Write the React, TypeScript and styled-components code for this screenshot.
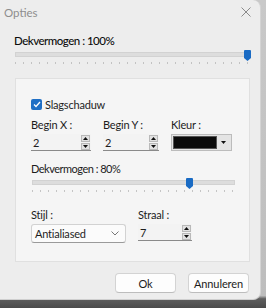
import React from "react";
import styled, { createGlobalStyle } from "styled-components";

const Global = createGlobalStyle`
  html, body { margin: 0; padding: 0; }
  body {
    width: 266px; height: 308px; overflow: hidden;
    background: linear-gradient(180deg, #c9c9c9 0%, #bdbdbd 96%, #5e5e5e 97%, #4a4a4a 100%);
    font-family: "Lato", "Noto Sans", sans-serif;
    font-size: 11px;
    letter-spacing: -0.2px;
    color: #1e1e1e;
  }
`;

const Window = styled.div`
  width: 261px;
  height: 300px;
  box-sizing: border-box;
  background: #ededed;
  border-right: 1px solid #d4d4d4;
  border-bottom: 1px solid #cfcfcf;
  border-radius: 0 8px 8px 0;
  display: flex;
  flex-direction: column;
`;

const TitleBar = styled.div`
  height: 24px;
  display: flex;
  align-items: center;
  justify-content: space-between;
  padding: 0 6px 0 4px;
  color: #8d8d8d;
  font-size: 11.5px;
  letter-spacing: 0;
`;

const Close = styled.span`
  width: 16px;
  display: flex;
  justify-content: center;
`;

const Body = styled.div`
  padding: 10px 11px 0 14px;
  display: flex;
  flex-direction: column;
`;

const Label = styled.div<{ $strong?: boolean; $tight?: boolean }>`
  height: 13px;
  line-height: 13px;
  font-size: ${p => (p.$strong ? 11.5 : 11)}px;
  font-weight: ${p => (p.$strong ? 500 : 400)};
  letter-spacing: ${p => (p.$tight || p.$strong ? "-0.5px" : "-0.2px")};
  color: ${p => (p.$strong ? "#0e0e0e" : "#1c1c1c")};
  white-space: nowrap;
`;

const SliderWrap = styled.div<{ $w: number }>`
  position: relative;
  width: ${p => p.$w}px;
  height: 16px;
  margin-top: 3px;
  margin-left: 1px;
`;

const Track = styled.div`
  position: absolute;
  left: 0; right: 0; top: 2px;
  height: 5px;
  background: #dddddd;
  border: 1px solid #d2d2d2;
  box-sizing: border-box;
`;

const Ticks = styled.div`
  position: absolute;
  left: 0; right: 0; top: 12px;
  height: 2px;
  background: repeating-linear-gradient(90deg, #b0b0b0 0 1px, transparent 1px 8px);
  opacity: 0.7;
`;

const Thumb = styled.svg`
  position: absolute;
  top: 0;
`;

const Group = styled.div`
  margin-top: 12px;
  margin-left: 1px;
  width: 235px;
  height: 184px;
  box-sizing: border-box;
  background: #f5f5f5;
  border: 1px solid #e0e0e0;
  padding: 19px 0 0 15px;
  display: flex;
  flex-direction: column;
`;

const CheckRow = styled.label`
  display: flex;
  align-items: center;
  gap: 3px;
  height: 13px;
`;

const Box = styled.span`
  width: 11px;
  height: 11px;
  border-radius: 2px;
  background: #1f6fc5;
  display: flex;
  align-items: center;
  justify-content: center;
`;

const FieldsRow = styled.div<{ $mt: number }>`
  display: flex;
  gap: 12px;
  margin-top: ${p => p.$mt}px;
`;

const Field = styled.div<{ $w: number }>`
  width: ${p => p.$w}px;
  display: flex;
  flex-direction: column;
  gap: 3px;
`;

const SpinBox = styled.div`
  height: 17px;
  display: flex;
  align-items: center;
  justify-content: space-between;
  border-bottom: 1px solid #8a8a8a;
  background: #f3f3f3;
  padding-left: 2px;
  box-sizing: border-box;
  font-size: 11px;
`;

const Spinner = styled.div`
  display: flex;
  flex-direction: column;
  gap: 1px;
  margin-right: 1px;
`;

const SpinBtn = styled.span`
  width: 9px;
  height: 7px;
  background: #e2e2e2;
  border: 1px solid #b9b9b9;
  box-sizing: border-box;
  display: flex;
  align-items: center;
  justify-content: center;
`;

const ColorCombo = styled.div`
  height: 17px;
  box-sizing: border-box;
  border: 1px solid #bcbcbc;
  background: #e4e4e4;
  display: flex;
  align-items: center;
  padding: 1px;
`;

const Swatch = styled.div`
  flex: 1;
  height: 100%;
  background: #0b0b0b;
  border: 1px solid #555;
  box-sizing: border-box;
`;

const ComboArrow = styled.div`
  width: 13px;
  display: flex;
  justify-content: center;
`;

const Section = styled.div<{ $mt: number }>`
  margin-top: ${p => p.$mt}px;
`;

const Select = styled.div`
  height: 19px;
  box-sizing: border-box;
  border: 1px solid #d2d2d2;
  border-bottom-color: #9a9a9a;
  border-radius: 3px;
  background: #fbfbfb;
  display: flex;
  align-items: center;
  justify-content: space-between;
  padding: 0 6px 0 3px;
  font-size: 11px;
`;

const Buttons = styled.div`
  display: flex;
  justify-content: flex-end;
  gap: 12px;
  margin-top: 11px;
`;

const Button = styled.button`
  width: 61px;
  height: 20px;
  box-sizing: border-box;
  background: #fdfdfd;
  border: 1px solid #d3d3d3;
  border-bottom-color: #bdbdbd;
  border-radius: 4px;
  font-family: inherit;
  font-size: 11px;
  letter-spacing: -0.1px;
  color: #1c1c1c;
  padding: 0;
`;

const UpArrow = () => (
  <svg width="5" height="3" viewBox="0 0 5 3"><path d="M0 3 L2.5 0 L5 3 Z" fill="#111" /></svg>
);
const DownArrow = () => (
  <svg width="5" height="3" viewBox="0 0 5 3"><path d="M0 0 L2.5 3 L5 0 Z" fill="#111" /></svg>
);

const Spin = ({ value }: { value: string }) => (
  <SpinBox>
    <span>{value}</span>
    <Spinner>
      <SpinBtn><UpArrow /></SpinBtn>
      <SpinBtn><DownArrow /></SpinBtn>
    </Spinner>
  </SpinBox>
);

const Slider = ({ width, pos }: { width: number; pos: number }) => (
  <SliderWrap $w={width}>
    <Track />
    <Ticks />
    <Thumb width="7" height="11" viewBox="0 0 7 11" style={{ left: pos - 3 }}>
      <path d="M1 0 H6 Q7 0 7 1 V8 L3.5 11 L0 8 V1 Q0 0 1 0 Z" fill="#1a6bc4" />
    </Thumb>
  </SliderWrap>
);

export default function App() {
  return (
    <>
      <Global />
      <Window>
        <TitleBar>
          <span>Opties</span>
          <Close>
            <svg width="10" height="10" viewBox="0 0 10 10">
              <path d="M0.5 0.5 L9.5 9.5 M9.5 0.5 L0.5 9.5" stroke="#8a8a8a" strokeWidth="1" />
            </svg>
          </Close>
        </TitleBar>
        <Body>
          <Label $strong>Dekvermogen : 100%</Label>
          <Slider width={235} pos={232} />
          <Group>
            <CheckRow>
              <Box>
                <svg width="8" height="7" viewBox="0 0 8 7">
                  <path d="M1 3.5 L3 5.5 L7 1" stroke="#fff" strokeWidth="1.3" fill="none" />
                </svg>
              </Box>
              <span>Slagschaduw</span>
            </CheckRow>
            <FieldsRow $mt={7}>
              <Field $w={60}>
                <Label>Begin X :</Label>
                <Spin value="2" />
              </Field>
              <Field $w={56}>
                <Label>Begin Y :</Label>
                <Spin value="2" />
              </Field>
              <Field $w={61}>
                <Label>Kleur :</Label>
                <ColorCombo>
                  <Swatch />
                  <ComboArrow><DownArrow /></ComboArrow>
                </ColorCombo>
              </Field>
            </FieldsRow>
            <Section $mt={11}>
              <Label $tight>Dekvermogen : 80%</Label>
              <Slider width={203} pos={157} />
            </Section>
            <FieldsRow $mt={14}>
              <Field $w={95}>
                <Label>Stijl :</Label>
                <Select>
                  <span>Antialiased</span>
                  <svg width="8" height="5" viewBox="0 0 8 5">
                    <path d="M0.5 0.5 L4 4 L7.5 0.5" stroke="#777" fill="none" />
                  </svg>
                </Select>
              </Field>
              <Field $w={54}>
                <Label>Straal :</Label>
                <Spin value="7" />
              </Field>
            </FieldsRow>
          </Group>
          <Buttons>
            <Button>Ok</Button>
            <Button>Annuleren</Button>
          </Buttons>
        </Body>
      </Window>
    </>
  );
}
